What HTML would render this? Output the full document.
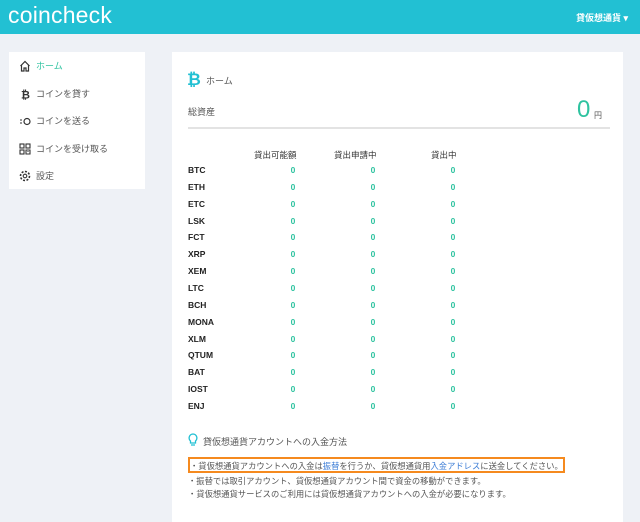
<!DOCTYPE html>
<html><head><meta charset="utf-8"><style>
*{margin:0;padding:0;box-sizing:border-box}
body{width:640px;height:509px;overflow:hidden;background:#eef1f6;font-family:"Liberation Sans","Noto Sans CJK JP",sans-serif;position:relative;color:#333}
.hd{position:absolute;left:0;top:0;width:640px;height:34px;background:#22c0d3}
.logo{position:absolute;left:8px;top:2px;color:#fff;font-size:23px;letter-spacing:0.2px;font-weight:300}
.hr{position:absolute;right:12px;top:11px;color:#fff;font-size:9px;font-weight:bold}
.side{position:absolute;left:9px;top:52px;width:136px;height:137px;background:#fff}
.it{position:absolute;left:10px;font-size:9px;color:#555;display:flex;align-items:center}
.it svg{margin-right:5px}
.main{position:absolute;left:172px;top:52px;width:451px;height:470px;background:#fff}
.a{position:absolute;font-size:9px;white-space:nowrap}
.sym{left:16px;font-weight:bold;font-size:8.5px;color:#222}
.z{color:#2fc3a0;font-weight:bold;font-size:8.5px;width:20px;text-align:center}
.n{font-size:8.3px;color:#555}
</style></head><body>
<div class="hd"><div class="logo">coincheck</div><div class="hr">貸仮想通貨 ▾</div></div>
<div class="side">
<div class="it" style="top:7px;color:#2fc3a0"><svg width="12" height="12" viewBox="0 0 12 12"><path d="M1.5 6 L6 1.5 L10.5 6 M2.5 5 V11 H5 V8 H7 V11 H9.5 V5" fill="none" stroke="#333" stroke-width="1.2"/></svg>ホーム</div>
<div class="it" style="top:35px"><svg width="12" height="12" viewBox="0 0 12 12"><text x="2" y="10.5" font-size="11" font-weight="bold" fill="#333" font-family="Liberation Sans">₿</text></svg>コインを貸す</div>
<div class="it" style="top:62px"><svg width="12" height="12" viewBox="0 0 12 12"><path d="M1 5h2M1 8h2" stroke="#333" stroke-width="1.1"/><circle cx="8" cy="6.5" r="3" fill="none" stroke="#333" stroke-width="1.2"/></svg>コインを送る</div>
<div class="it" style="top:90px"><svg width="12" height="12" viewBox="0 0 12 12" fill="none" stroke="#333" stroke-width="1.1"><rect x="1" y="1" width="4" height="4"/><rect x="7" y="1" width="4" height="4"/><rect x="1" y="7" width="4" height="4"/><path d="M7 7h4v4H7z M8.5 8.5h1"/></svg>コインを受け取る</div>
<div class="it" style="top:117px"><svg width="12" height="12" viewBox="0 0 12 12"><circle cx="6" cy="6" r="4.5" fill="none" stroke="#333" stroke-width="1.6" stroke-dasharray="2 1.5"/><circle cx="6" cy="6" r="1.8" fill="none" stroke="#333" stroke-width="1.1"/></svg>設定</div>
</div>
<div class="main">
<div class="a" style="left:15px;top:18px;color:#22c0d3;font-size:17px;font-weight:bold">₿</div>
<div class="a" style="left:34px;top:22px;color:#555">ホーム</div>
<div class="a" style="left:16px;top:53px;color:#555">総資産</div>
<div class="a" style="left:405px;top:44px;color:#2fc3a0;font-size:24px;font-weight:300">0</div>
<div class="a" style="left:422px;top:58px;color:#555;font-size:8px">円</div>
<div style="position:absolute;left:16px;top:75px;width:422px;height:2px;background:#e3e3e3"></div>
<div class="a" style="left:82px;top:97px;font-size:8.5px;color:#333">貸出可能額</div>
<div class="a" style="left:162px;top:97px;font-size:8.5px;color:#333">貸出申請中</div>
<div class="a" style="left:259px;top:97px;font-size:8.5px;color:#333">貸出中</div>
<div id="rows"></div>
<div class="a" style="left:16px;top:381px;"><svg width="10" height="14" viewBox="0 0 10 14"><path d="M5 1a4 4 0 0 0-2.5 7v2h5V8A4 4 0 0 0 5 1z M3 12h4" fill="none" stroke="#22c0d3" stroke-width="1.3"/></svg></div>
<div class="a" style="left:31px;top:383px;color:#555;font-size:9px">貸仮想通貨アカウントへの入金方法</div>
<div style="position:absolute;left:16px;top:405px;width:377px;height:16px;border:2px solid #f58a1f"></div>
<div class="a n" style="left:18px;top:408px">・貸仮想通貨アカウントへの入金は<span style="color:#3a7bd5">振替</span>を行うか、貸仮想通貨用<span style="color:#3a7bd5">入金アドレス</span>に送金してください。</div>
<div class="a n" style="left:16px;top:423px">・振替では取引アカウント、貸仮想通貨アカウント間で資金の移動ができます。</div>
<div class="a n" style="left:16px;top:436px">・貸仮想通貨サービスのご利用には貸仮想通貨アカウントへの入金が必要になります。</div>
</div>
<script>
var s=["BTC","ETH","ETC","LSK","FCT","XRP","XEM","LTC","BCH","MONA","XLM","QTUM","BAT","IOST","ENJ"],h="";
s.forEach(function(c,i){var t=113+i*16.86;h+='<div class="a sym" style="top:'+t+'px">'+c+'</div>';[111,191,271].forEach(function(x){h+='<div class="a z" style="left:'+x+'px;top:'+t+'px">0</div>'})});
document.getElementById("rows").innerHTML=h;
</script>
</body></html>
